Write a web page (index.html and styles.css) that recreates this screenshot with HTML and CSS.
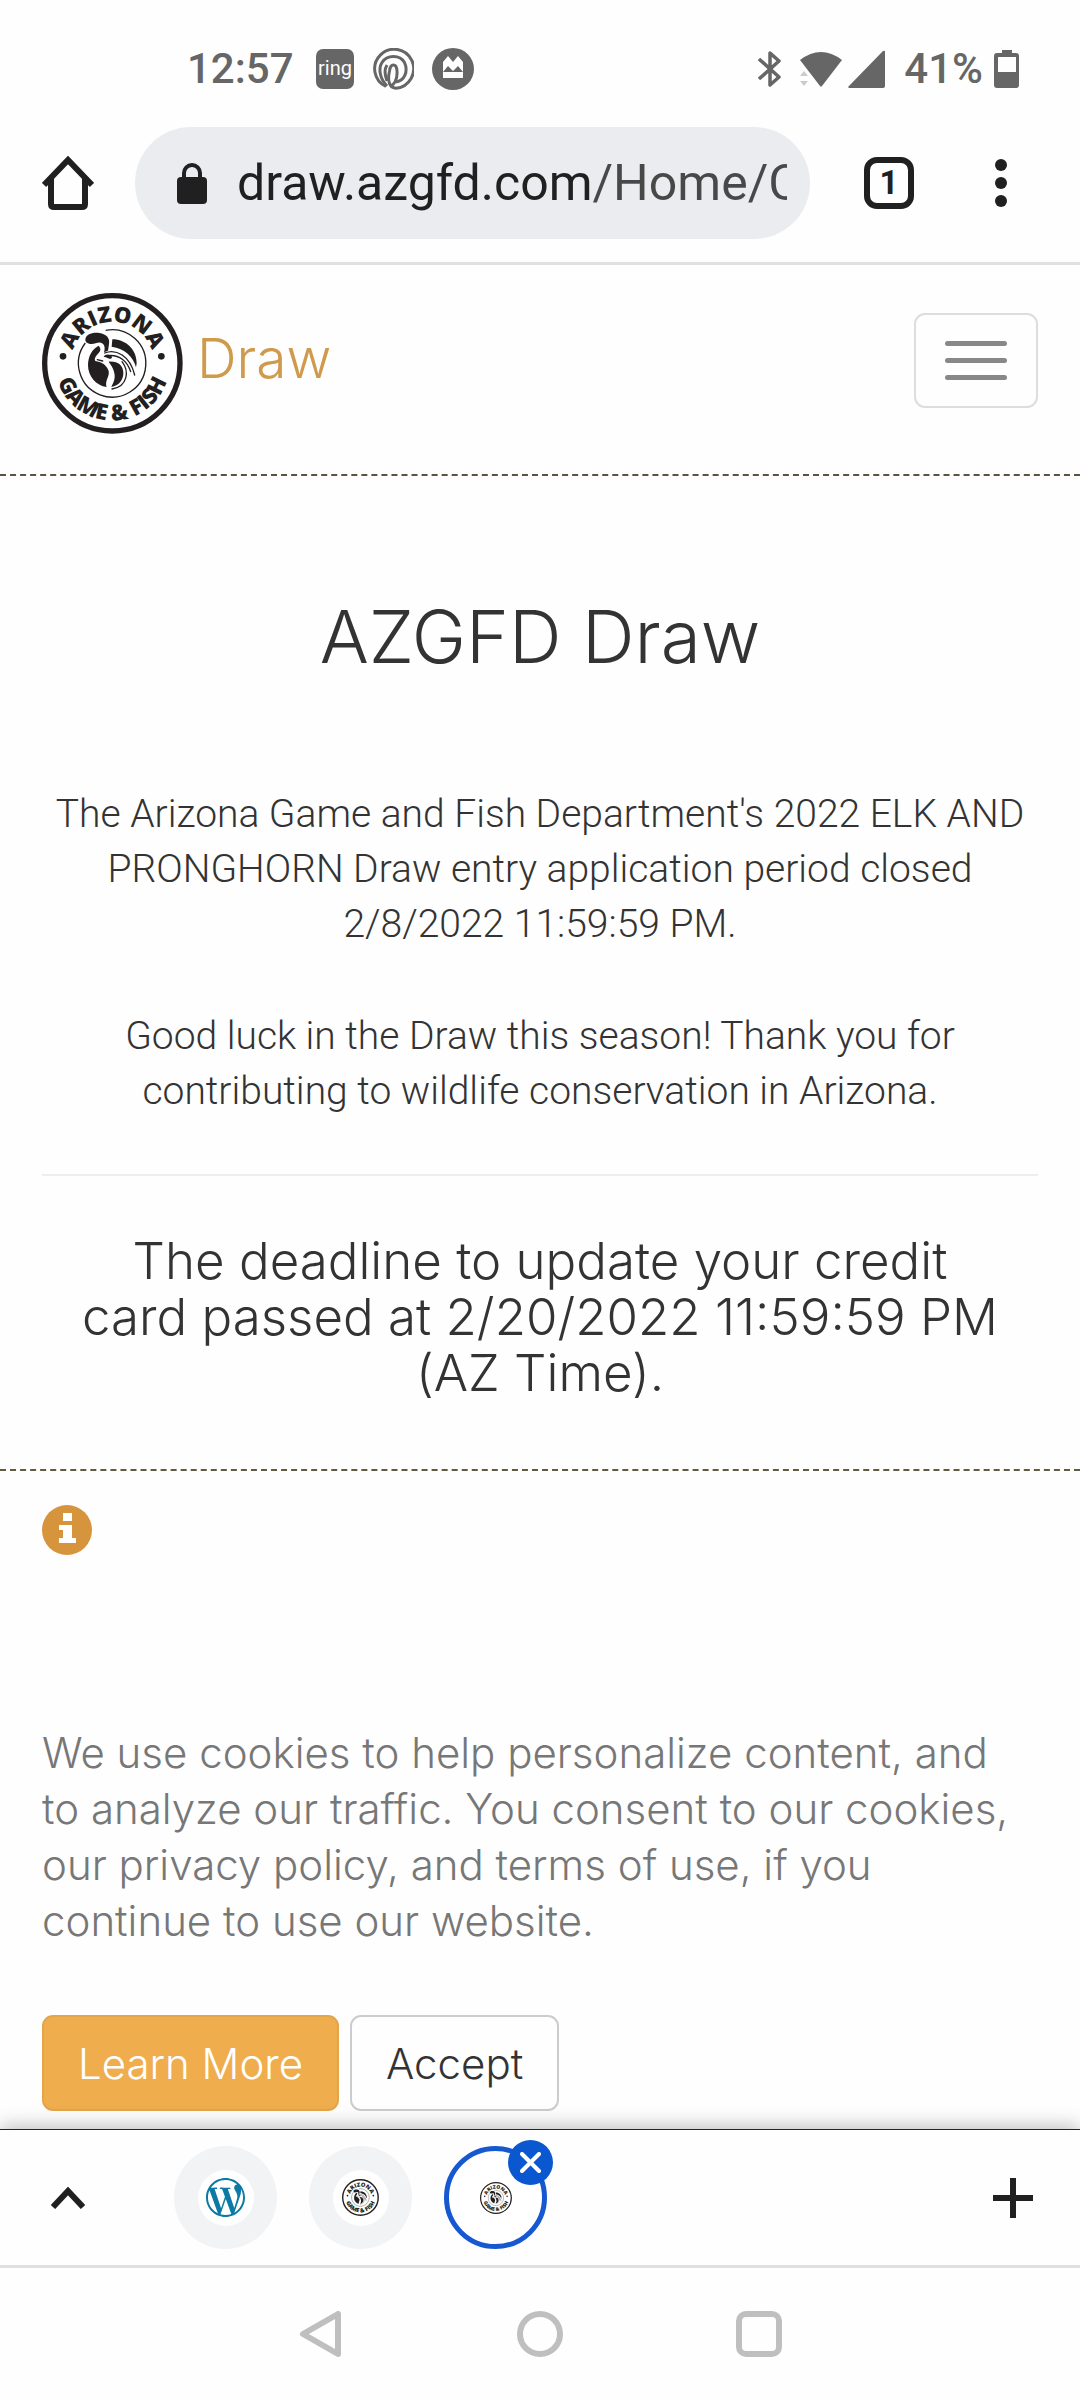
FILE: index.html
```html
<!DOCTYPE html>
<html lang="en">
<head>
<meta charset="utf-8">
<meta name="viewport" content="width=device-width, initial-scale=1">
<title>AZGFD Draw</title>
<link rel="stylesheet" href="styles.css">
</head>
<body>
<svg class="defs" aria-hidden="true">
  <defs>
    <path id="arc-top" d="M105 231a124 124 0 0 1 248 0"/>
    <path id="arc-bottom" d="M57 231a172 172 0 0 0 344 0"/>
    <symbol id="seal" viewBox="18 20 423 423">
      <circle cx="229" cy="231" r="203" fill="#fff" stroke="#231f20" stroke-width="16"/>
      <path d="M209 132A101 101 0 1 1 148 170" fill="none" stroke="#231f20" stroke-width="4"/>
      <g fill="#231f20">
        <text class="seal-text" text-anchor="middle"><textPath href="#arc-top" startOffset="50%">ARIZONA</textPath></text>
        <text class="seal-text" text-anchor="middle"><textPath href="#arc-bottom" startOffset="50%">GAME &amp; FISH</textPath></text>
        <circle cx="81" cy="210" r="10"/>
        <circle cx="376" cy="210" r="10"/>
        <path d="M148 161c0-17 22-24 42-21 22 3 33 17 29 33l-3 20-12 5c4-14 2-26-10-29-12-2-18 6-32 4-9-2-14-6-14-12z"/>
        <path d="M188 178c8 10 6 16-2 24-8 8-12 16-8 22 8 2 18 3 26 10 10 10 18 20 13 34-5 14-9 22-5 34-32-4-56-32-56-66 0-26 12-48 32-58z"/>
        <path d="M229 159c42 0 73 32 73 72l-2 12c-8-32-34-56-73-62z"/>
        <path d="M203 212c5-9 14-9 22-4 6 5 2 10-5 9-6-1-9-6-17-5z"/>
        <path d="M218 226c28-2 44 12 44 34 0 22-14 38-36 42 6-14 14-26 8-46-3-12-9-20-16-30z"/>
      </g>
      <g fill="none" stroke="#231f20" stroke-width="4" stroke-linecap="round">
        <path d="M206 200c34-14 76 8 90 66M216 208c34-4 58 16 68 48"/>
        <path d="M258 226c22 28 18 74-30 82M200 224l-16-4"/>
      </g>
    </symbol>
  </defs>
</svg>

<div class="status">
  <div class="status-left">
    <span>12:57</span>
    <svg class="ring" width="38" height="40" viewBox="0 0 38 40"><rect width="38" height="40" rx="7" fill="#666"/><text class="ring-text" x="19" y="26" text-anchor="middle" fill="#fff">ring</text></svg>
    <svg class="swirl" width="42" height="42" viewBox="0 0 42 42" fill="none" stroke="#666" stroke-width="3"><path d="M14 38.500A19.500 19.500 0 1 1 24 40.200C18 40 15 34 17.500 23c1-8 7-8 7.500 0 .5 7-2 13-7 16"/><path d="M15 38C8 31 6 21 10 14.500c5-8 18-8 22.500 0 4 9 0 18-8.500 19.500"/><path d="M15 33c-3-8-2-13 0-16"/></svg>
    <svg class="peaks" width="42" height="42" viewBox="0 0 42 42"><circle cx="21" cy="21" r="21" fill="#666"/><path d="M11 30V14l5-6 5 6 5-6 5 6v16z" fill="#fff"/><path d="M11 24l5-6 5 5 5-5 5 6z" fill="#666"/></svg>
  </div>
  <div class="status-right">
    <svg width="23" height="36" viewBox="0 0 23 36" fill="none" stroke="#666" stroke-width="3.500" stroke-linejoin="round"><path d="M1 8l20 18-9 8V2l9 8L1 28"/></svg>
    <svg class="wifi" width="42" height="36" viewBox="0 0 42 36"><path d="M0 9Q21-7 42 9L22 35Q21 36 20 35z" fill="#666"/><path d="M0 25l4-5 4 5zM0 30l4 5 4-5z" fill="#ccc"/></svg>
    <svg class="signal" width="37" height="38" viewBox="0 0 37 38"><path d="M0 37L35 1q2-1 2 1v34q0 2-2 2H1z" fill="#666"/></svg>
    <span>41%</span>
    <svg class="battery" width="25" height="38" viewBox="0 0 25 38"><path d="M8 0h10v3h4q3 0 3 3v29q0 3-3 3H3q-3 0-3-3V6q0-3 3-3h5zM4 7v15h18V7z" fill="#666" fill-rule="evenodd"/></svg>
  </div>
</div>

<div class="toolbar">
  <button class="icon-button" aria-label="Home"><svg width="52" height="54" viewBox="0 0 52 54" fill="none" stroke="#202020" stroke-width="6"><path d="M2 29L26 4l24 25"/><path d="M9 22v26q0 3 3 3h28q3 0 3-3V22"/></svg></button>
  <div class="address">
    <svg width="30" height="41" viewBox="0 0 30 41"><rect y="14" width="30" height="27" rx="4" fill="#202020"/><path d="M7 16v-6a8 8 0 0 1 16 0v6" fill="none" stroke="#202020" stroke-width="4"/></svg>
    <input class="url" type="text" aria-label="Address" value="draw.azgfd.com/Home/C">
  </div>
  <button class="tab-count" aria-label="Open tabs">1</button>
  <button class="icon-button more" aria-label="More"><svg width="12" height="50" viewBox="0 0 12 50" fill="#202020"><circle cx="6" cy="7" r="6"/><circle cx="6" cy="25" r="6"/><circle cx="6" cy="43" r="6"/></svg></button>
</div>

<header class="site-header">
  <a class="brand" href="#"><svg width="141" height="141" role="img" aria-label="Arizona Game &amp; Fish"><use href="#seal"/></svg><span>Draw</span></a>
  <button class="menu" aria-label="Menu"><i></i><i></i><i></i></button>
</header>

<main class="hero">
  <h1>AZGFD Draw</h1>
  <p>The Arizona Game and Fish Department's 2022 ELK AND PRONGHORN Draw entry application period closed 2/8/2022&nbsp;11:59:59&nbsp;PM.</p>
  <p>Good luck in the Draw this season! Thank you for contributing to wildlife conservation in Arizona.</p>
  <hr>
  <h2>The deadline to update your credit card passed at 2/20/2022 11:59:59 PM (AZ&nbsp;Time).</h2>
</main>

<section class="cookies">
  <svg width="50" height="50" viewBox="0 0 50 50"><circle cx="25" cy="25" r="25" fill="#d6943c"/><path d="M21 8h9v8h-9zM17 20h13v13h4v5H17v-5h4v-8h-4z" fill="#fff"/></svg>
  <p>We use cookies to help personalize content, and to analyze our traffic. You consent to our cookies, our privacy policy, and terms of use, if you continue to use our website.</p>
  <div class="actions">
    <button class="btn btn-warning">Learn More</button>
    <button class="btn">Accept</button>
  </div>
</section>

<div class="tabs">
  <button class="icon-button" aria-label="Expand tabs"><svg width="34" height="22" viewBox="0 0 34 22" fill="none" stroke="#202020" stroke-width="6"><path d="M2 20L17 4l15 16"/></svg></button>
  <div class="tab-list">
    <button class="tab" aria-label="WordPress"><span class="favicon"><svg width="39" height="39" viewBox="0 0 24 24" fill="#0d7aa5"><path d="M21.469 6.825c.84 1.537 1.318 3.3 1.318 5.175 0 3.979-2.156 7.456-5.363 9.325l3.295-9.527c.615-1.54.82-2.771.82-3.864 0-.405-.026-.78-.07-1.11m-7.981.105c.647-.03 1.232-.105 1.232-.105.582-.075.514-.93-.067-.899 0 0-1.755.135-2.88.135-1.064 0-2.85-.15-2.85-.15-.585-.03-.661.855-.075.885 0 0 .54.061 1.125.09l1.68 4.605-2.37 7.08L5.354 6.9c.649-.03 1.234-.1 1.234-.1.585-.075.516-.93-.065-.896 0 0-1.746.138-2.874.138-.2 0-.438-.008-.69-.015C4.911 3.15 8.235 1.215 12 1.215c2.809 0 5.365 1.072 7.286 2.833-.046-.003-.091-.009-.141-.009-1.06 0-1.812.923-1.812 1.914 0 .89.513 1.643 1.06 2.531.411.72.89 1.643.89 2.977 0 .915-.354 1.994-.821 3.479l-1.075 3.585-3.9-11.61.001.014zM12 22.784c-1.059 0-2.081-.153-3.048-.437l3.237-9.406 3.315 9.087c.024.053.05.101.078.149-1.12.393-2.325.609-3.582.609M1.211 12c0-1.564.336-3.05.935-4.39L7.29 21.709C3.694 19.96 1.212 16.271 1.211 12M12 0C5.385 0 0 5.385 0 12s5.385 12 12 12 12-5.385 12-12S18.615 0 12 0"/></svg></span></button>
    <button class="tab" aria-label="AZGFD"><span class="favicon"><svg width="37" height="37"><use href="#seal"/></svg></span></button>
    <button class="tab tab-current" aria-label="Close AZGFD Draw"><span class="favicon"><svg width="32" height="32"><use href="#seal"/></svg></span><span class="close"><svg width="21" height="21" viewBox="0 0 21 21" stroke="#fff" stroke-width="4" stroke-linecap="round"><path d="M2 2l17 17M19 2L2 19"/></svg></span></button>
  </div>
  <button class="icon-button" aria-label="New tab"><svg width="40" height="40" viewBox="0 0 40 40" fill="#202020"><path d="M17 0h6v17h17v6H23v17h-6V23H0v-6h17z"/></svg></button>
</div>

<nav class="system-nav" aria-label="System">
  <button class="icon-button" aria-label="Back"><svg width="46" height="46" viewBox="0 0 46 46" fill="none" stroke="#bfbfbf" stroke-width="6" stroke-linejoin="round"><path d="M40 3v40L5 23z"/></svg></button>
  <button class="icon-button" aria-label="Home screen"><svg width="46" height="46" viewBox="0 0 46 46" fill="none" stroke="#bfbfbf" stroke-width="6"><circle cx="23" cy="23" r="20"/></svg></button>
  <button class="icon-button" aria-label="Recent apps"><svg width="46" height="46" viewBox="0 0 46 46" fill="none" stroke="#bfbfbf" stroke-width="6"><rect x="3" y="3" width="40" height="40" rx="7"/></svg></button>
</nav>
</body>
</html>
```
FILE: styles.css
```css
* { box-sizing: border-box; }

body {
  margin: 0;
  min-height: 100vh;
  display: flex;
  flex-direction: column;
  background: #fefefe;
  color: #333;
  font-family: Inter, sans-serif;
  font-weight: 300;
}

svg { display: block; flex: none; }
.defs { position: absolute; width: 0; height: 0; }
.seal-text { font: 800 66px "Open Sans", sans-serif; }

button {
  margin: 0;
  padding: 0;
  border: 0;
  background: none;
  font: inherit;
  color: inherit;
}
.icon-button { display: flex; }

/* Device status bar */
.status {
  display: flex;
  justify-content: space-between;
  padding: 47px 61px 36px 187px;
  color: #666;
  font: 500 42px/44px Roboto, sans-serif;
}
.status-left, .status-right { display: flex; align-items: center; }
.status-left { gap: 18px; }
.ring { margin-left: 4px; }
.ring-text { font: 400 20px Roboto, sans-serif; }
.status-right { gap: 19px; }
.signal { margin-left: -13px; }
.battery { margin-left: -8px; }

/* Browser toolbar */
.toolbar {
  display: flex;
  align-items: center;
  padding: 0 73px 23px 42px;
  border-bottom: 3px solid #e0e0e0;
}
.address {
  flex: 1;
  min-width: 0;
  display: flex;
  align-items: center;
  gap: 30px;
  height: 112px;
  margin: 0 54px 0 41px;
  padding: 0 23px 0 42px;
  border-radius: 56px;
  background: #ebecf0;
}
.url {
  flex: 1;
  min-width: 0;
  padding: 0;
  border: 0;
  outline: 0;
  font: 400 50px/60px Roboto, sans-serif;
  color: transparent;
  background: linear-gradient(90deg, #202020 354px, #484848 354px);
  -webkit-background-clip: text;
  background-clip: text;
}
.tab-count {
  width: 50px;
  height: 52px;
  border: 6px solid #202020;
  border-radius: 13px;
  color: #202020;
  font: 700 33px/40px Roboto, sans-serif;
}
.more { margin-left: 81px; }

/* Site header */
.site-header {
  display: flex;
  justify-content: space-between;
  align-items: flex-start;
  padding: 28px 42px 40px;
  border-bottom: 2px dashed #5f5140;
}
.brand {
  display: flex;
  align-items: center;
  gap: 14px;
  color: #cf9a4b;
  font-size: 55px;
  line-height: 60px;
  text-decoration: none;
}
.brand span { padding-bottom: 12px; }
.menu {
  display: flex;
  flex-direction: column;
  align-items: center;
  justify-content: center;
  gap: 12px;
  width: 124px;
  height: 95px;
  margin-top: 20px;
  border: 2px solid #ddd;
  border-radius: 11px;
}
.menu i { width: 62px; height: 5px; border-radius: 3px; background: #888; }

/* Announcement */
.hero {
  padding: 121px 42px 68px;
  border-bottom: 2px dashed #5f5a40;
  text-align: center;
}
h1, h2, p { margin: 0; font-weight: 300; }
h1 { margin-bottom: 110px; font-size: 73px; line-height: 80px; }
.hero p { font: 300 39px/55px Roboto, sans-serif; }
.hero p + p { margin-top: 57px; }
hr { margin: 55px 0 57px; border: 0; border-top: 2px solid #eee; }
h2 { padding: 0 36px; font-size: 51px; line-height: 56px; }

/* Cookie notice */
.cookies { flex: 1; padding: 34px 42px 18px; }
.cookies p {
  margin: 170px 0 66px;
  padding-right: 20px;
  color: #777;
  font-size: 42px;
  line-height: 56px;
}
.actions { display: flex; gap: 11px; }
.btn {
  height: 96px;
  padding: 0 34px;
  border: 2px solid #ccc;
  border-radius: 11px;
  font-size: 42px;
}
.btn-warning { border-color: #e3a54a; background: #f0ad4e; color: #fff; }

/* Tab strip */
.tabs {
  position: relative;
  display: flex;
  align-items: center;
  height: 139px;
  padding: 0 47px 0 51px;
  border-top: 1px solid #20282c;
  border-bottom: 3px solid #e0e0e0;
  background: #fefefe;
  box-shadow: 0 -3px 18px rgba(0, 0, 0, .25);
}
.tab-list { flex: 1; display: flex; gap: 32px; margin-left: 89px; }
.tab {
  position: relative;
  display: grid;
  place-items: center;
  width: 103px;
  height: 103px;
  border-radius: 50%;
  background: #f2f3f5;
}
.favicon {
  display: grid;
  place-items: center;
  width: 56px;
  height: 56px;
  border-radius: 50%;
  background: #fff;
}
.tab-current { border: 5px solid #1558d0; background: #fff; }
.close {
  position: absolute;
  top: -11px;
  right: -11px;
  display: grid;
  place-items: center;
  width: 45px;
  height: 45px;
  border-radius: 50%;
  background: #0b57d0;
}

/* Device navigation */
.system-nav {
  position: relative;
  display: flex;
  justify-content: center;
  align-items: center;
  gap: 173px;
  height: 132px;
  background: #fefefe;
}
```
